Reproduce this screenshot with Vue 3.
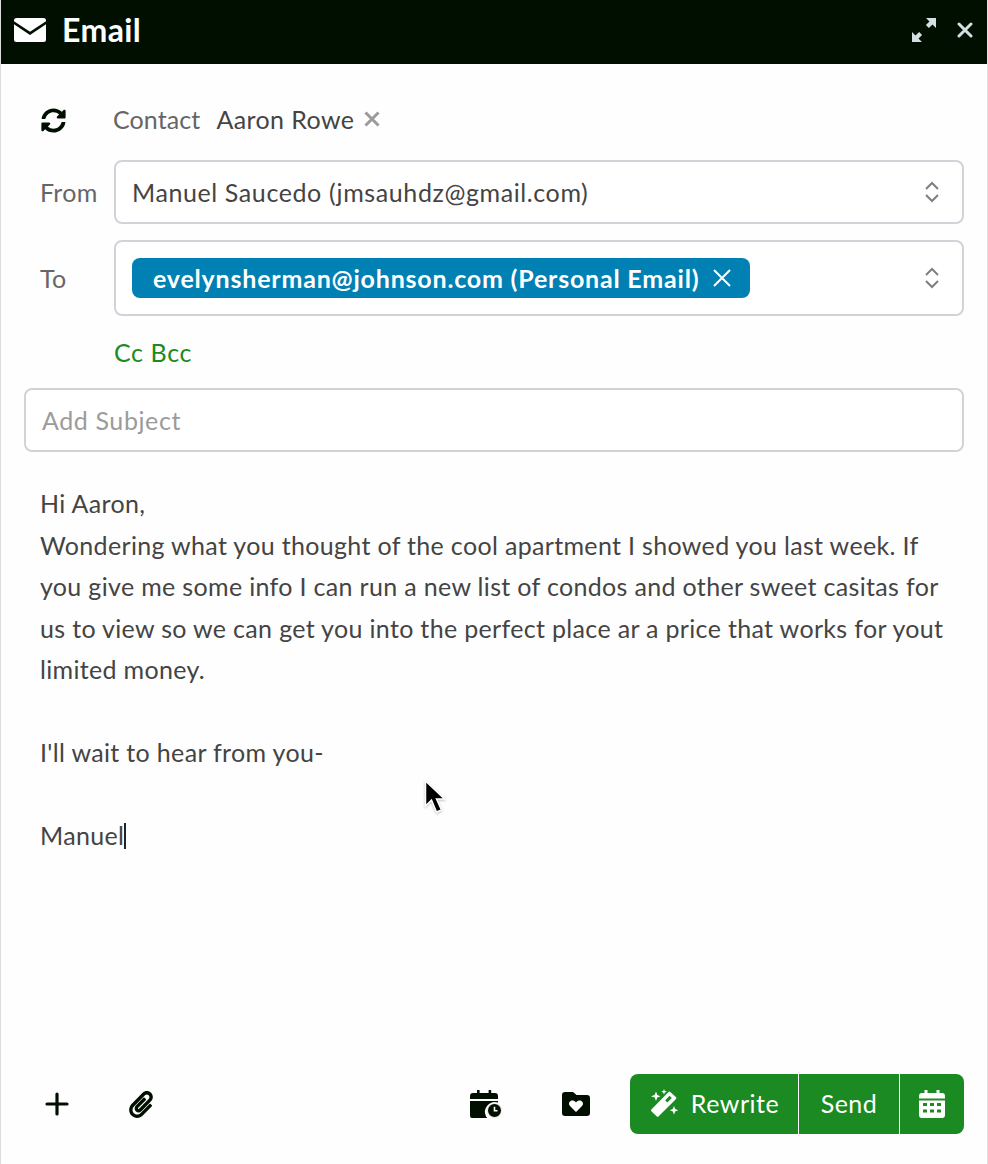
<script setup>
const lines = [
  'Hi Aaron,',
  'Wondering what you thought of the cool apartment I showed you last week. If',
  'you give me some info I can run a new list of condos and other sweet casitas for',
  'us to view so we can get you into the perfect place ar a price that works for yout',
  'limited money.',
  '\u00a0',
  "I'll wait to hear from you-",
  '\u00a0',
]
</script>

<template>
  <div class="win">
    <header class="head">
      <svg class="mail" viewBox="0 0 32 24"><path d="M2.500 0h27A2.500 2.500 0 0 1 32 2.500v.7L16 13.800 0 3.200v-.7A2.500 2.500 0 0 1 2.500 0z" fill="#fff"/><path d="M0 6.300 16 17 32 6.300v15.200a2.500 2.500 0 0 1-2.500 2.500h-27A2.500 2.500 0 0 1 0 21.500z" fill="#fff"/></svg>
      <h1 class="title">Email</h1>
      <svg class="expand" viewBox="0 0 24 24" fill="#d5dfe3"><path d="M14 0h10v10l-3.500-3.500-3.600 3.600-3-3 3.600-3.600z"/><path d="M10 24H0V14l3.500 3.500 3.600-3.600 3 3-3.600 3.600z"/></svg>
      <svg class="close" viewBox="0 0 16 16"><path d="M2 2l12 12M14 2 2 14" stroke="#d5dfe3" stroke-width="3" stroke-linecap="round"/></svg>
    </header>

    <main class="content">
      <div class="contact">
        <svg class="sync" viewBox="0 0 512 512"><path fill="#000f00" d="M370.72 133.28C339.458 104.008 298.888 87.962 255.848 88c-77.458.068-144.328 53.178-162.791 126.85-1.344 5.363-6.122 9.15-11.651 9.15H24.103c-7.498 0-13.194-6.807-11.807-14.176C33.933 94.924 134.813 8 256 8c66.448 0 126.791 26.136 171.315 68.685L463.03 40.97C478.149 25.851 504 36.559 504 57.941V192c0 13.255-10.745 24-24 24H345.941c-21.382 0-32.09-25.851-16.971-40.971l41.75-41.749zM32 296h134.059c21.382 0 32.09 25.851 16.971 40.971l-41.75 41.75c31.262 29.273 71.835 45.319 114.876 45.28 77.418-.07 144.315-53.144 162.787-126.849 1.344-5.363 6.122-9.15 11.651-9.15h57.304c7.498 0 13.194 6.807 11.807 14.176C478.067 417.076 377.187 504 256 504c-66.448 0-126.791-26.136-171.315-68.685L48.97 471.03C33.851 486.149 8 475.441 8 454.059V320c0-13.255 10.745-24 24-24z"/></svg>
        <span class="contact-label">Contact</span>
        <span class="contact-name">Aaron Rowe</span>
        <svg class="contact-x" viewBox="0 0 16 16"><path d="M1.500 1.500l13 13M14.500 1.500l-13 13" stroke="#9b9b9b" stroke-width="3"/></svg>
      </div>

      <div class="field from">
        <label class="field-label">From</label>
        <div class="select from-box">
          <span class="select-text">Manuel Saucedo (jmsauhdz@gmail.com)</span>
          <svg class="updown" viewBox="0 0 14 22"><path d="M1 8l6-6 6 6M1 14l6 6 6-6" fill="none" stroke="#7f7f7f" stroke-width="2"/></svg>
        </div>
      </div>

      <div class="field to">
        <label class="field-label">To</label>
        <div class="select to-box">
          <span class="chip">
            <span>evelynsherman@johnson.com (Personal Email)</span>
            <svg class="chip-x" viewBox="0 0 18 18"><path d="M1 1l16 16M17 1 1 17" stroke="#fff" stroke-width="2"/></svg>
          </span>
          <svg class="updown" viewBox="0 0 14 22"><path d="M1 8l6-6 6 6M1 14l6 6 6-6" fill="none" stroke="#7f7f7f" stroke-width="2"/></svg>
        </div>
      </div>

      <div class="ccbcc">Cc Bcc</div>

      <div class="subject">Add Subject</div>

      <div class="body">
        <div v-for="(l, i) in lines" :key="i">{{ l }}</div>
        <div>Manuel<span class="caret"></span></div>
      </div>

      <footer class="bar">
        <svg class="plus" viewBox="0 0 24 24"><path d="M12 2v20M2 12h20" stroke="#000f00" stroke-width="3.200" stroke-linecap="round"/></svg>
        <svg class="clip" viewBox="0 0 448 512"><path fill="#000f00" d="M43.246 466.142c-58.43-60.289-57.341-157.511 1.386-217.581L254.392 34c44.316-45.332 116.351-45.336 160.671 0 43.89 44.894 43.943 117.329 0 162.276L232.214 383.128c-29.855 30.537-78.633 30.111-107.982-.998-28.275-29.97-27.368-77.473 1.452-106.953l143.743-146.835c6.182-6.314 16.312-6.422 22.626-.241l22.861 22.379c6.315 6.182 6.422 16.312.241 22.626L171.427 319.927c-4.932 5.045-5.236 13.428-.648 18.292 4.372 4.634 11.245 4.711 15.688.165l182.849-186.851c19.613-20.062 19.613-52.725-.011-72.798-19.189-19.627-49.957-19.637-69.154 0L90.39 293.295c-34.763 35.56-35.299 93.12-1.191 128.313 34.01 35.093 88.985 35.137 123.058.286l172.06-175.999c6.177-6.319 16.307-6.433 22.626-.256l22.877 22.364c6.319 6.177 6.434 16.307.256 22.626l-172.06 175.998c-59.576 60.938-155.943 60.216-214.77-.485z"/></svg>
        <svg class="calclock" viewBox="0 0 32 28">
          <path fill="#000f00" d="M7 0h2.600v3h9V0h2.600v3H25a3 3 0 0 1 3 3v3H0V6a3 3 0 0 1 3-3h4zM0 11h28v1.600A10 10 0 0 0 16 26.500c.4.600.9 1.100 1.400 1.500H2a2 2 0 0 1-2-2z"/>
          <circle cx="24.500" cy="20.500" r="7" fill="#000f00" stroke="#fff" stroke-width="1"/>
          <path d="M24.500 16.800v4h3" fill="none" stroke="#fff" stroke-width="1.600"/>
        </svg>
        <svg class="folder" viewBox="0 0 28 24"><path fill="#000f00" fill-rule="evenodd" d="M3 0h7.500a2 2 0 0 1 1.500.7L14.500 3H25a3 3 0 0 1 3 3v15a3 3 0 0 1-3 3H3a3 3 0 0 1-3-3V3a3 3 0 0 1 3-3zm11 20 6-6c1.600-1.700 1.200-4.100-.6-5-1.800-.9-3.800-.3-5.400 1.500C12.400 8.700 10.400 8.100 8.600 9c-1.800.9-2.200 3.300-.6 5z"/></svg>

        <div class="actions">
          <button class="act rewrite">
            <svg class="wand" viewBox="0 0 30 28" fill="#fff">
              <path d="M21.500 3.200 26.800 8a1.500 1.500 0 0 1 0 2.200L9.700 27.300a1.500 1.500 0 0 1-2.100 0l-5-4.800a1.500 1.500 0 0 1 0-2.200L19.300 3.200a1.500 1.500 0 0 1 2.200 0zm-.9 3.600-4.400 4.500 2.200 2.100 4.400-4.400z" fill-rule="evenodd"/>
              <path d="M7 2.500 8.300 6l3.200 1.300-3.200 1.300L7 12 5.700 8.600 2 7.300 5.700 6zM15 0l.8 2 2 .8-2 .8-.8 2-.8-2-2-.8 2-.8zM25 17l1.200 3 3 1.200-3 1.200-1.200 3-1.200-3-3-1.200 3-1.200z"/>
            </svg>
            <span>Rewrite</span>
          </button>
          <button class="act send">Send</button>
          <button class="act cal">
            <svg class="calendar" viewBox="0 0 26 28" fill="#fff" fill-rule="evenodd">
              <path d="M5.500 0h3v3h9V0h3v3H23a3 3 0 0 1 3 3v2.500H0V6a3 3 0 0 1 3-3h2.500zM0 10.500h26V25a3 3 0 0 1-3 3H3a3 3 0 0 1-3-3zM4 13v3h4v-3zm7 0v3h4v-3zm7 0v3h4v-3zM4 19.500v3h4v-3zm7 0v3h4v-3zm7 0v3h4v-3z"/>
            </svg>
          </button>
        </div>
      </footer>
    </main>

    <svg class="pointer" viewBox="0 0 22 36"><path d="M2 1v25l6-6 5 12 5-2-5-11h8z" fill="#000" stroke="#fff" stroke-width="1.500"/></svg>
  </div>
</template>

<style scoped>
.win {
  position: relative;
  width: 988px;
  height: 1164px;
  box-sizing: border-box;
  background: #fefefe;
  border-left: 1px solid #dcdcdc;
  border-right: 1px solid #e2e2e2;
  font-family: "Lato", "Liberation Sans", sans-serif;
  color: #444;
  overflow: hidden;
  display: flex;
  flex-direction: column;
}
.head {
  height: 64px;
  box-sizing: border-box;
  margin: 0 -1px;
  flex: none;
  background: #000f00;
  display: flex;
  align-items: center;
  padding: 0 15px 5px 14px;
}
.mail { width: 32px; height: 24px; margin-right: 16px; }
.title { margin: 0; font-size: 32px; font-weight: 700; color: #fff; flex: 1; letter-spacing: .4px; line-height: 1; }
.expand { width: 24px; height: 24px; margin-right: 21px; }
.close { width: 16px; height: 16px; }

.content {
  flex: 1;
  display: flex;
  flex-direction: column;
  padding: 0 23px;
  min-height: 0;
}
.contact {
  height: 96px;
  box-sizing: border-box;
  padding-top: 14px;
  flex: none;
  display: flex;
  align-items: center;
  font-size: 25px;
}
.sync { width: 25px; height: 25px; margin: 2px 47px 0 17px; }
.contact-label { color: #666; margin-right: 16px; letter-spacing: .1px; }
.contact-name { color: #444; margin-right: 10px; letter-spacing: .4px; }
.contact-x { width: 16px; height: 16px; }

.field { display: flex; align-items: center; }
.field-label { width: 90px; padding-left: 16px; box-sizing: border-box; font-size: 25px; color: #666; letter-spacing: .3px; line-height: 1.2; }
.select {
  flex: 1;
  box-sizing: border-box;
  border: 2px solid #d0d3d8;
  border-radius: 8px;
  display: flex;
  align-items: center;
  justify-content: space-between;
  padding: 0 23px 0 16px;
  background: #fff;
}
.from-box { height: 64px; }
.to-box { height: 76px; }
.to { margin-top: 16px; }
.select-text { font-size: 25px; letter-spacing: .6px; color: #444; line-height: 1.2; }
.updown { width: 14px; height: 22px; }
.chip {
  height: 40px;
  background: #0080b3;
  color: #fff;
  border-radius: 8px;
  display: flex;
  align-items: center;
  padding: 0 19px 0 21px;
  font-size: 25px;
  font-weight: 700;
  letter-spacing: .8px;
}
.chip-x { width: 18px; height: 18px; margin-left: 14px; }
.ccbcc { height: 72px; line-height: 72px; margin-left: 90px; font-size: 25px; color: #1c8a23; flex: none; letter-spacing: .6px; }
.subject {
  flex: none;
  box-sizing: border-box;
  height: 64px;
  border: 2px solid #d0d3d8;
  border-radius: 8px;
  display: flex;
  align-items: center;
  padding: 0 0 0 16px;
  font-size: 25px;
  color: #9b9b9b;
  letter-spacing: .6px;
  background: #fff;
}
.body {
  flex: 1;
  padding: 31px 0 0 16px;
  font-size: 25px;
  line-height: 41.500px;
  color: #444;
  white-space: nowrap;
  letter-spacing: .33px;
}
.caret {
  display: inline-block;
  width: 1.500px;
  height: 26px;
  background: #222;
  vertical-align: -4px;
}
.bar {
  flex: none;
  height: 60px;
  margin-bottom: 30px;
  display: flex;
  align-items: center;
}
.plus { width: 24px; height: 24px; margin-left: 21px; }
.clip { width: 24px; height: 27px; margin-left: 60px; }
.calclock { width: 32px; height: 28px; margin-left: auto; margin-right: 60px; }
.folder { width: 28px; height: 24px; margin-right: 40px; }
.actions {
  display: flex;
  height: 60px;
  background: #1c8a23;
  border-radius: 8px;
  overflow: hidden;
}
.act {
  border: 0;
  background: transparent;
  color: #fff;
  font: inherit;
  font-size: 25px;
  letter-spacing: .5px;
  display: flex;
  align-items: center;
  justify-content: center;
  padding: 0 0 2px;
}
.rewrite { width: 169px; border-right: 1px solid #fff; gap: 12px; }
.send { width: 101px; border-right: 1px solid #fff; }
.cal { width: 64px; padding: 0; }
.wand { width: 30px; height: 28px; }
.calendar { width: 26px; height: 28px; }
.pointer {
  position: absolute;
  left: 422px;
  top: 780px;
  width: 23px;
  height: 36px;
  filter: drop-shadow(0 1px 1px rgba(0,0,0,.25));
}
</style>
